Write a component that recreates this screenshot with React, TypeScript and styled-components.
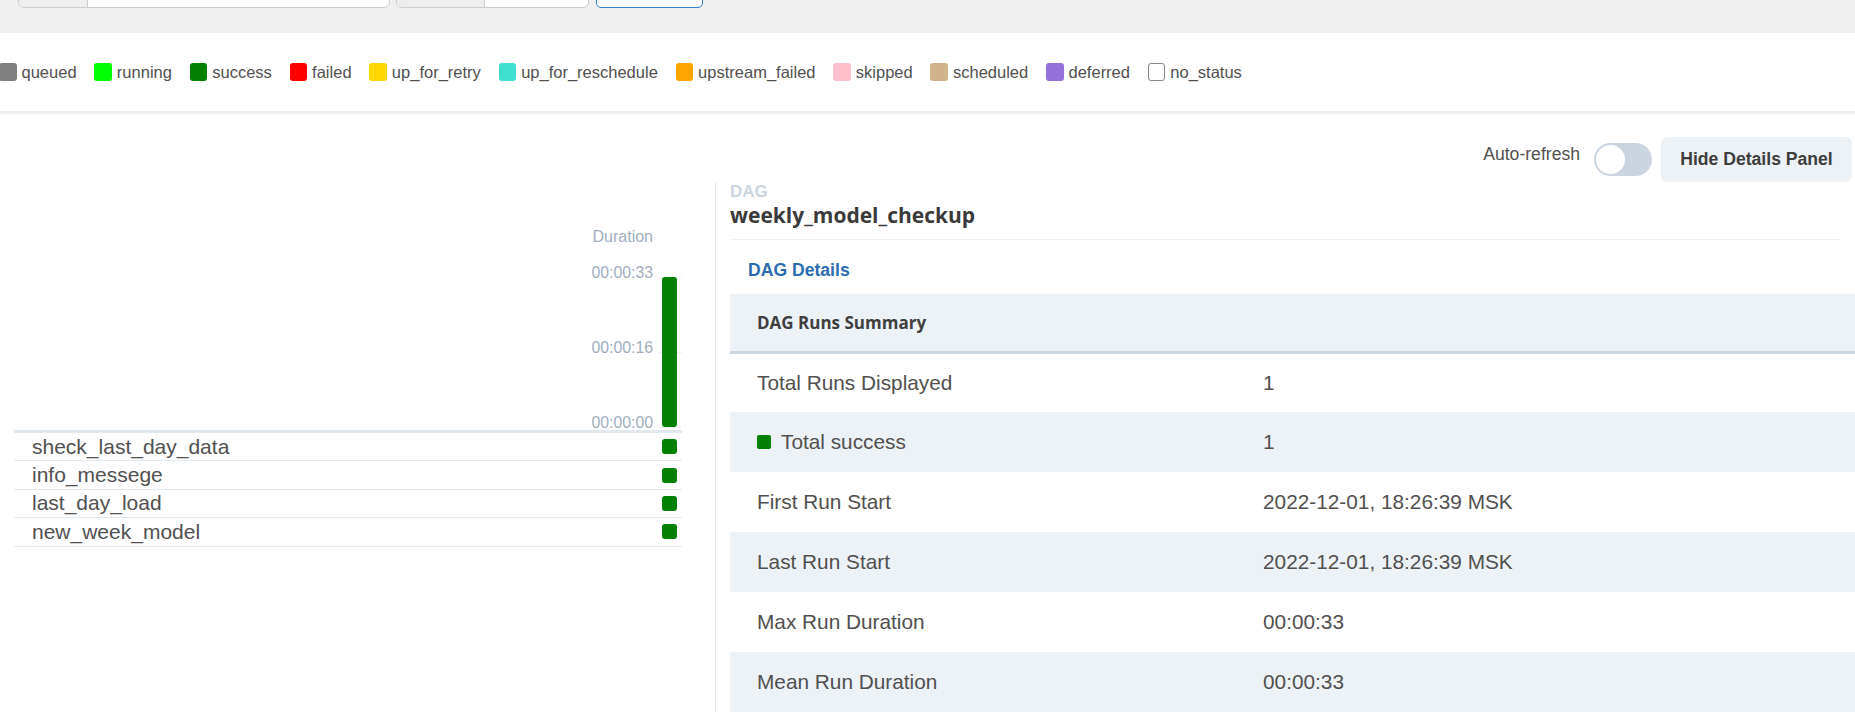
import React from 'react';
import styled, { createGlobalStyle } from 'styled-components';

const GlobalStyle = createGlobalStyle`
  html, body {
    margin: 0;
    padding: 0;
    background: #fff;
  }
  body {
    width: 1855px;
    height: 715px;
    overflow: hidden;
    font-family: 'Liberation Sans', Arial, sans-serif;
    color: #51504f;
  }
`;

type StateItem = { name: string; color: string };

const states: StateItem[] = [
  { name: 'queued', color: '#808080' },
  { name: 'running', color: '#00ff00' },
  { name: 'success', color: '#008000' },
  { name: 'failed', color: '#ff0000' },
  { name: 'up_for_retry', color: '#ffd700' },
  { name: 'up_for_reschedule', color: '#40e0d0' },
  { name: 'upstream_failed', color: '#ffa500' },
  { name: 'skipped', color: '#ffc0cb' },
  { name: 'scheduled', color: '#d2b48c' },
  { name: 'deferred', color: '#9370db' },
  { name: 'no_status', color: '#ffffff' },
];

const tasks = ['sheck_last_day_data', 'info_messege', 'last_day_load', 'new_week_model'];

const summary = [
  { label: 'Total Runs Displayed', value: '1' },
  { label: 'Total success', value: '1', state: '#008000' },
  { label: 'First Run Start', value: '2022-12-01, 18:26:39 MSK' },
  { label: 'Last Run Start', value: '2022-12-01, 18:26:39 MSK' },
  { label: 'Max Run Duration', value: '00:00:33' },
  { label: 'Mean Run Duration', value: '00:00:33' },
];

const maxDuration = 33;
const ticks = [
  { label: '00:00:33', value: 33 },
  { label: '00:00:16', value: 16.5 },
  { label: '00:00:00', value: 0 },
];
const PLOT_HEIGHT = 150;

const App = () => {
  return (
    <>
      <GlobalStyle />
      <TopBar>
        <FilterForm>
          <InputGroup width={372}>
            <InputAddon width={68} />
            <InputField />
          </InputGroup>
          <InputGroup width={193}>
            <InputAddon width={87} />
            <InputField />
          </InputGroup>
          <UpdateButton />
        </FilterForm>
      </TopBar>

      <LegendBar>
        {states.map((s) => (
          <LegendItem key={s.name}>
            <LegendSwatch color={s.color} outlined={s.name === 'no_status'} />
            {s.name}
          </LegendItem>
        ))}
      </LegendBar>

      <Toolbar>
        <ToggleLabel>Auto-refresh</ToggleLabel>
        <SwitchTrack>
          <SwitchThumb />
        </SwitchTrack>
        <PanelButton>Hide Details Panel</PanelButton>
      </Toolbar>

      <Content>
        <GridPanel>
          <DurationChart>
            <AxisTitle>Duration</AxisTitle>
            <Plot>
              {ticks.map((t) => {
                const top = (1 - t.value / maxDuration) * PLOT_HEIGHT;
                return (
                  <React.Fragment key={t.label}>
                    <TickLine style={{ top }} />
                    <TickLabel style={{ top: top - 13 }}>{t.label}</TickLabel>
                  </React.Fragment>
                );
              })}
              <RunBar />
            </Plot>
          </DurationChart>
          <TaskList>
            {tasks.map((t) => (
              <TaskRow key={t}>
                <TaskName>{t}</TaskName>
                <TaskInstance />
              </TaskRow>
            ))}
          </TaskList>
        </GridPanel>

        <DetailsPanel>
          <DagLabel>DAG</DagLabel>
          <DagTitle>weekly_model_checkup</DagTitle>
          <Divider />
          <TabBar>
            <Tab>DAG Details</Tab>
          </TabBar>
          <SummaryTable>
            <colgroup>
              <col style={{ width: 506 }} />
              <col />
            </colgroup>
            <tbody>
              <HeadRow>
                <Cell colSpan={2}>
                  <TableHeading>DAG Runs Summary</TableHeading>
                </Cell>
              </HeadRow>
              {summary.map((row, i) => (
                <SummaryRow key={row.label} striped={i % 2 === 1}>
                  <Cell>
                    <CellInner>
                      {row.state && <StateDot color={row.state} />}
                      {row.label}
                    </CellInner>
                  </Cell>
                  <Cell>{row.value}</Cell>
                </SummaryRow>
              ))}
            </tbody>
          </SummaryTable>
        </DetailsPanel>
      </Content>
    </>
  );
};

const TopBar = styled.div`
  height: 33px;
  background: #f0f0f0;
  overflow: hidden;
`;

const FilterForm = styled.div`
  display: flex;
  align-items: flex-end;
  margin-top: -32px;
  padding-left: 18px;
  gap: 6px;
`;

const InputGroup = styled.div<{ width: number }>`
  display: flex;
  width: ${(p) => p.width}px;
  height: 40px;
  box-sizing: border-box;
  border: 1px solid #cccccc;
  border-radius: 6px;
  background: #fff;
  overflow: hidden;
`;

const InputAddon = styled.div<{ width: number }>`
  width: ${(p) => p.width}px;
  background: #eeeeee;
  border-right: 1px solid #cccccc;
`;

const InputField = styled.div`
  flex: 1;
`;

const UpdateButton = styled.div`
  width: 107px;
  height: 40px;
  margin-left: 1px;
  box-sizing: border-box;
  border: 1px solid #3182ce;
  border-radius: 5px;
  background: #fff;
`;

const LegendBar = styled.div`
  display: flex;
  align-items: center;
  height: 78px;
  margin-left: -1px;
  gap: 17.8px;
  border-bottom: 3px solid #efefef;
`;

const LegendItem = styled.div`
  display: flex;
  align-items: center;
  gap: 5px;
  font-size: 16.5px;
  color: #51504f;
`;

const LegendSwatch = styled.span<{ color: string; outlined?: boolean }>`
  width: 17.5px;
  height: 17.5px;
  box-sizing: border-box;
  border-radius: 3px;
  background: ${(p) => p.color};
  border: ${(p) => (p.outlined ? '1px solid #8a8a8a' : 'none')};
`;

const Toolbar = styled.div`
  display: flex;
  justify-content: flex-end;
  align-items: center;
  height: 45px;
  margin-top: 23px;
  padding-right: 3px;
`;

const ToggleLabel = styled.span`
  font-size: 17.6px;
  color: #51504f;
  margin-bottom: 11px;
`;

const SwitchTrack = styled.div`
  display: flex;
  align-items: center;
  width: 58px;
  height: 33px;
  box-sizing: border-box;
  padding: 2px;
  margin-left: 14px;
  border-radius: 17px;
  background: #cbd5e0;
`;

const SwitchThumb = styled.span`
  width: 29px;
  height: 29px;
  border-radius: 50%;
  background: #fff;
`;

const PanelButton = styled.button`
  height: 45px;
  width: 191px;
  margin-left: 9px;
  border: none;
  border-radius: 6px;
  background: #edf2f7;
  font-family: 'Liberation Sans', Arial, sans-serif;
  font-size: 17.6px;
  font-weight: 700;
  color: #3d3d3d;
  padding: 0;
`;

const Content = styled.div`
  display: flex;
  align-items: stretch;
`;

const GridPanel = styled.div`
  width: 668px;
  margin-left: 14px;
  margin-right: 33px;
  flex-shrink: 0;
`;

const DurationChart = styled.div`
  display: flex;
  flex-direction: column;
  align-items: flex-end;
  padding-top: 46px;
`;

const AxisTitle = styled.div`
  font-size: 16px;
  line-height: 18px;
  color: #a0aec0;
  margin-right: 29px;
`;

const Plot = styled.div`
  position: relative;
  width: 122px;
  height: ${PLOT_HEIGHT}px;
  margin-top: 31px;
`;

const TickLine = styled.div`
  position: absolute;
  left: 99px;
  right: 0;
  height: 1px;
  background: #edf2f7;
`;

const TickLabel = styled.div`
  position: absolute;
  right: 29px;
  font-size: 15.8px;
  line-height: 18px;
  color: #a0aec0;
  white-space: nowrap;
`;

const RunBar = styled.div`
  position: absolute;
  right: 5px;
  top: 0;
  bottom: 0;
  width: 15px;
  border-radius: 3px;
  background: #008000;
`;

const TaskList = styled.div`
  margin-top: 3px;
  border-top: 3px solid #e2e8f0;
`;

const TaskRow = styled.div`
  display: flex;
  align-items: center;
  justify-content: space-between;
  height: 28.4px;
  box-sizing: border-box;
  padding: 0 5px 0 18px;
  border-bottom: 1.5px solid #e2e8f0;
`;

const TaskName = styled.span`
  font-size: 21px;
  color: #51504f;
`;

const TaskInstance = styled.span`
  width: 15px;
  height: 15px;
  border-radius: 3px;
  background: #008000;
`;

const DetailsPanel = styled.div`
  flex: 1;
  min-width: 0;
  padding-left: 14px;
  border-left: 1.5px solid #e2e8f0;
`;

const DagLabel = styled.div`
  font-size: 17px;
  line-height: 20px;
  font-weight: 700;
  color: #cbd5e0;
`;

const DagTitle = styled.div`
  font-family: 'Open Sans', 'Liberation Sans', sans-serif;
  font-size: 21px;
  line-height: 26px;
  font-weight: 700;
  color: #3a3a3a;
`;

const Divider = styled.div`
  height: 1px;
  margin: 11px 15px 0 0;
  background: #edf2f7;
`;

const TabBar = styled.div`
  display: flex;
  align-items: center;
  height: 54px;
  box-sizing: border-box;
  padding: 6px 0 0 18px;
`;

const Tab = styled.span`
  font-size: 17.6px;
  font-weight: 700;
  color: #2b6cb0;
`;

const SummaryTable = styled.table`
  width: 100%;
  table-layout: fixed;
  border-collapse: collapse;
`;

const HeadRow = styled.tr`
  height: 58px;
  background: #edf2f7;
  border-bottom: 3px solid #cbd5e0;
`;

const SummaryRow = styled.tr<{ striped: boolean }>`
  height: 60px;
  background: ${(p) => (p.striped ? '#edf2f7' : '#fff')};
`;

const Cell = styled.td`
  padding: 0 0 0 27px;
  vertical-align: middle;
  font-size: 20.8px;
  color: #51504f;
  white-space: nowrap;
`;

const CellInner = styled.span`
  display: inline-flex;
  align-items: center;
`;

const StateDot = styled.span<{ color: string }>`
  width: 14px;
  height: 14px;
  margin-right: 10px;
  border-radius: 2px;
  background: ${(p) => p.color};
`;

const TableHeading = styled.span`
  font-family: 'Open Sans', 'Liberation Sans', sans-serif;
  font-size: 17px;
  font-weight: 700;
  color: #3f3f3f;
`;

export default App;
